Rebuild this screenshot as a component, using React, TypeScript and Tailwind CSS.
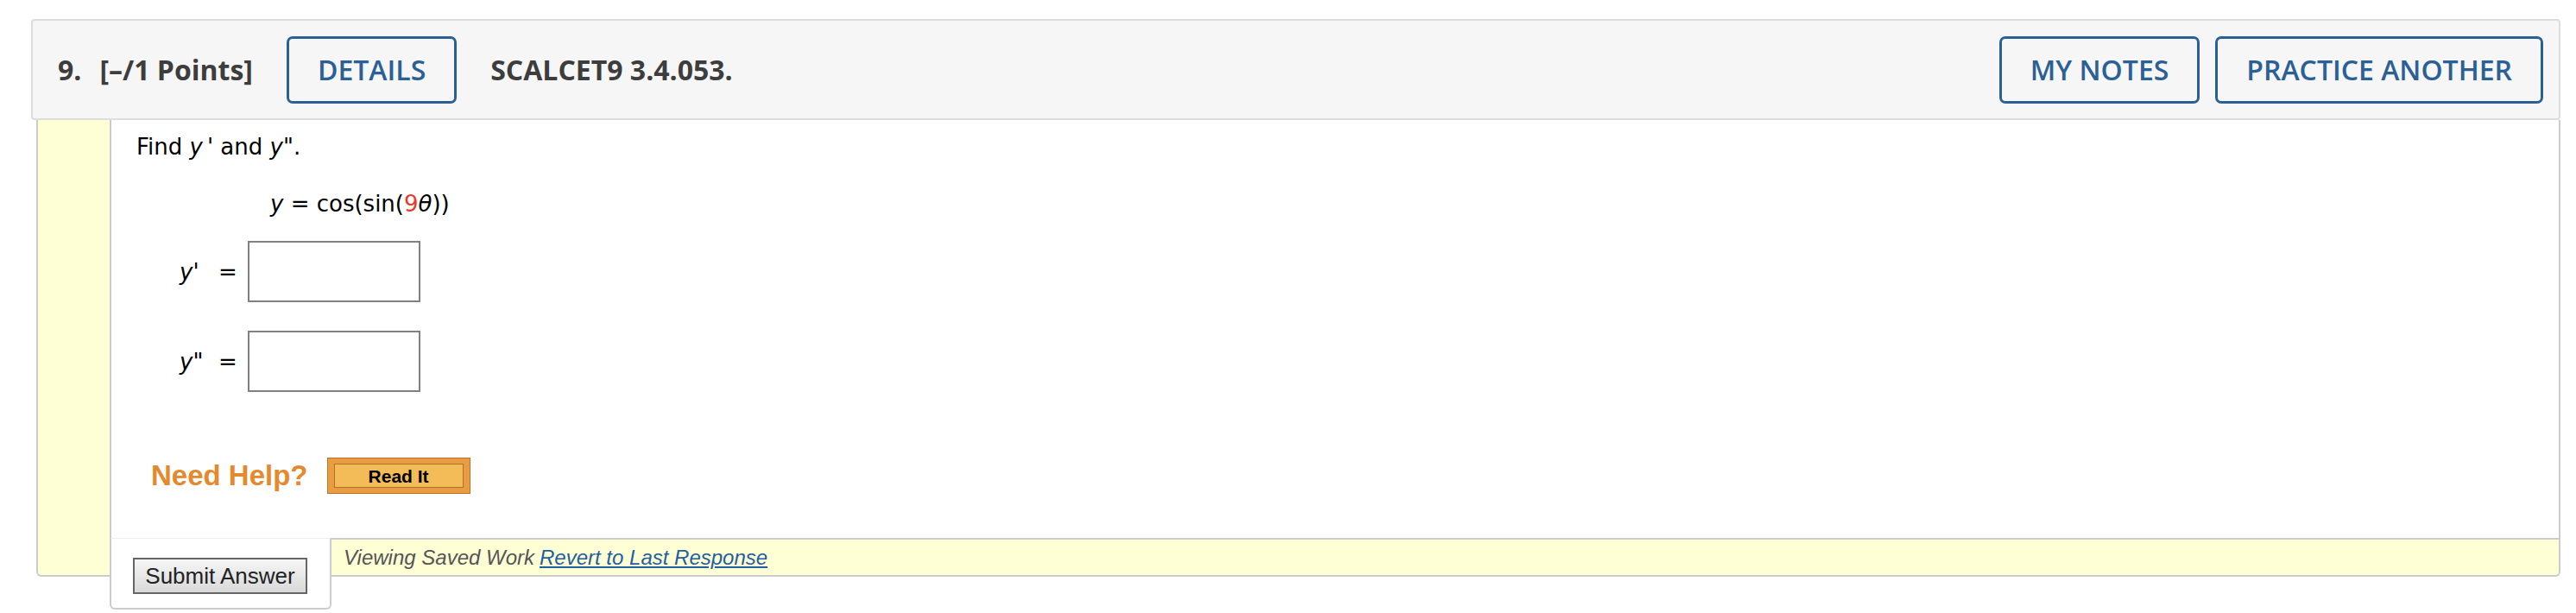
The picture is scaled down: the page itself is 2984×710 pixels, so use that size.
import React from "react";

function OutlineButton({label}: {label: string}) {
    return <button
        className="h-[78px] px-[33px] border-[3px] border-[#2b6095] rounded-[7px] text-[#2b6095] text-[32px] font-semibold bg-transparent"
        style={{fontFamily: '"Open Sans", sans-serif'}}
    >
        {label}
    </button>
}

function AnswerRow({mark}: {mark: string}) {
    return <div className="flex items-center h-[71px]">
        <div className="ml-[50px] w-[45px] flex items-baseline italic">
            <span>y</span><span>{mark}</span>
        </div>
        <span className="w-[15px]">=</span>
        <input className="ml-[19px] w-[200px] h-[71px] border-2 border-[#808080] bg-white outline-none"/>
    </div>
}

export default function App() {
    return <div className="w-full h-[710px] bg-white pt-[22px] pl-[36px] pr-[18px]">
        {/* question header */}
        <div
            className="h-[117px] flex items-center justify-between bg-[#f6f6f6] border-2 border-[#dddddd] rounded-[4px] pl-[29px] pr-[18px]"
            style={{fontFamily: '"Open Sans", sans-serif'}}
        >
            <div className="flex items-center text-[#3d3d3d] text-[32px] font-bold">
                <span>9.</span>
                <span className="ml-[21px]">[–/1 Points]</span>
                <span className="ml-[39px]"><OutlineButton label="DETAILS"/></span>
                <span className="ml-[39px]">SCALCET9 3.4.053.</span>
            </div>
            <div className="flex items-center gap-[18px]">
                <OutlineButton label="MY NOTES"/>
                <OutlineButton label="PRACTICE ANOTHER"/>
            </div>
        </div>

        {/* question body */}
        <div className="ml-[6px] h-[529px] flex bg-[#ffffd6] border-x-2 border-b-2 border-[#cccccc] rounded-b-[6px]">
            <div className="w-[83px]"></div>
            <div className="flex-1 flex flex-col">
                <div
                    className="h-[484px] bg-white border-l-2 border-[#cccccc] pl-[29px] pt-[15px] text-[26px] leading-[32px] text-black"
                    style={{fontFamily: '"DejaVu Sans", Verdana, sans-serif'}}
                >
                    <p>Find <i>y</i><i className="ml-[5px]">'</i> and <i>y"</i>.</p>
                    <p className="mt-[34px] ml-[155px]">
                        <i>y</i> = cos(sin(<span className="text-[#e8392c]">9</span><i>θ</i>))
                    </p>
                    <div className="mt-[27px] flex flex-col gap-[33px]">
                        <AnswerRow mark="'"/>
                        <AnswerRow mark={'"'}/>
                    </div>
                    <div className="mt-[76px] ml-[17px] flex items-center" style={{fontFamily: '"Liberation Sans", Arial, sans-serif'}}>
                        <span className="text-[33px] font-bold text-[#e4892e]">Need Help?</span>
                        <button className="ml-[22px] w-[166px] h-[42px] p-[6px_7px] bg-[#eb9c3e] border border-[#b57530]">
                            <div className="h-full border border-[#a87438] bg-[#f4bc58] flex items-center justify-center text-[21px] font-bold text-black leading-none">
                                Read It
                            </div>
                        </button>
                    </div>
                </div>
                <div className="h-[43px] flex items-start" style={{fontFamily: '"Liberation Sans", Arial, sans-serif'}}>
                    <div className="w-[257px] h-[83px] shrink-0 bg-white border-t border-t-[#eeeeee] border-x-2 border-b-2 border-x-[#cccccc] border-b-[#cccccc] rounded-b-[6px] pl-[25px] pt-[22px]">
                        <button className="w-[202px] h-[42px] border-2 border-[#666666] bg-gradient-to-b from-[#f6f6f6] to-[#d9d9d9] text-[26px] text-[#222222] leading-none">
                            Submit Answer
                        </button>
                    </div>
                    <div className="flex-1 h-[43px] border-t-2 border-[#cccccc] flex items-center pl-[14px] text-[24px] italic">
                        <span className="text-[#555555]">Viewing Saved Work</span>
                        <a href="#" className="ml-[6px] text-[#1f5fa0] underline">Revert to Last Response</a>
                    </div>
                </div>
            </div>
        </div>
    </div>
}
